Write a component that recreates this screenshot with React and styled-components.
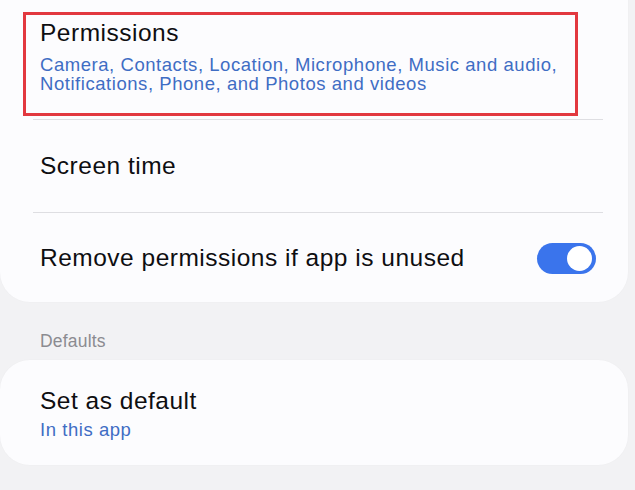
import React from 'react';
import styled, { createGlobalStyle } from 'styled-components';

const GlobalStyle = createGlobalStyle`
  html, body {
    margin: 0;
    padding: 0;
    background: #f2f2f4;
  }
  body {
    font-family: "Liberation Sans", Arial, sans-serif;
    -webkit-font-smoothing: antialiased;
  }
`;

const Screen = styled.div`
  width: 635px;
  height: 490px;
  overflow: hidden;
  background: #f2f2f4;
`;

const Card = styled.section`
  width: 628px;
  margin-top: ${(p) => p.$offset || 0}px;
  padding-top: ${(p) => p.$padTop || 0}px;
  background: #fcfcfe;
  border-radius: 30px;
  box-shadow: 0 0 2px rgba(0, 0, 0, 0.03);
`;

const Row = styled.div`
  display: flex;
  align-items: center;
  justify-content: space-between;
  min-height: ${(p) => p.$height}px;
  padding: 0 32px 0 40px;
  box-sizing: border-box;
`;

const Highlight = styled.div`
  margin-left: 23px;
  width: 555px;
  height: 104px;
  box-sizing: border-box;
  border: 3px solid #e2383f;
  padding: 4px 0 0 14px;
`;

const TextBlock = styled.div`
  display: flex;
  flex-direction: column;
`;

const Title = styled.div`
  font-size: 24.5px;
  line-height: 28px;
  color: #0e0e11;
  letter-spacing: 0.5px;
`;

const Summary = styled.div`
  font-size: 18.5px;
  line-height: 19px;
  color: #3f6dc4;
  letter-spacing: 0.55px;
  margin-top: ${(p) => p.$gap || 3}px;
`;

const Divider = styled.hr`
  border: 0;
  height: 1px;
  background: #dedee2;
  margin: 0 25px 0 33px;
`;

const SectionLabel = styled.div`
  padding: 29px 0 0 40px;
  height: 58px;
  box-sizing: border-box;
  font-size: 17.5px;
  color: #8b8b90;
  letter-spacing: 0.2px;
`;

const Switch = styled.div`
  position: relative;
  width: 59px;
  height: 31px;
  border-radius: 16px;
  background: #3a74ec;
  flex-shrink: 0;
  margin-top: 2px;
`;

const Knob = styled.span`
  position: absolute;
  top: 3px;
  right: 4px;
  width: 25px;
  height: 25px;
  border-radius: 50%;
  background: #ffffff;
`;

export default function App() {
  return (
    <Screen>
      <GlobalStyle />
      <Card $offset={-40} $padTop={52}>
        <Highlight>
          <Title>Permissions</Title>
          <Summary $gap={8}>
            Camera, Contacts, Location, Microphone, Music and audio,
            <br />
            Notifications, Phone, and Photos and videos
          </Summary>
        </Highlight>
        <Divider style={{ marginTop: 3 }} />
        <Row $height={92}>
          <Title>Screen time</Title>
        </Row>
        <Divider />
        <Row $height={89}>
          <Title>Remove permissions if app is unused</Title>
          <Switch>
            <Knob />
          </Switch>
        </Row>
      </Card>
      <SectionLabel>Defaults</SectionLabel>
      <Card>
        <Row $height={105}>
          <TextBlock>
            <Title>Set as default</Title>
            <Summary $gap={5}>In this app</Summary>
          </TextBlock>
        </Row>
      </Card>
    </Screen>
  );
}
